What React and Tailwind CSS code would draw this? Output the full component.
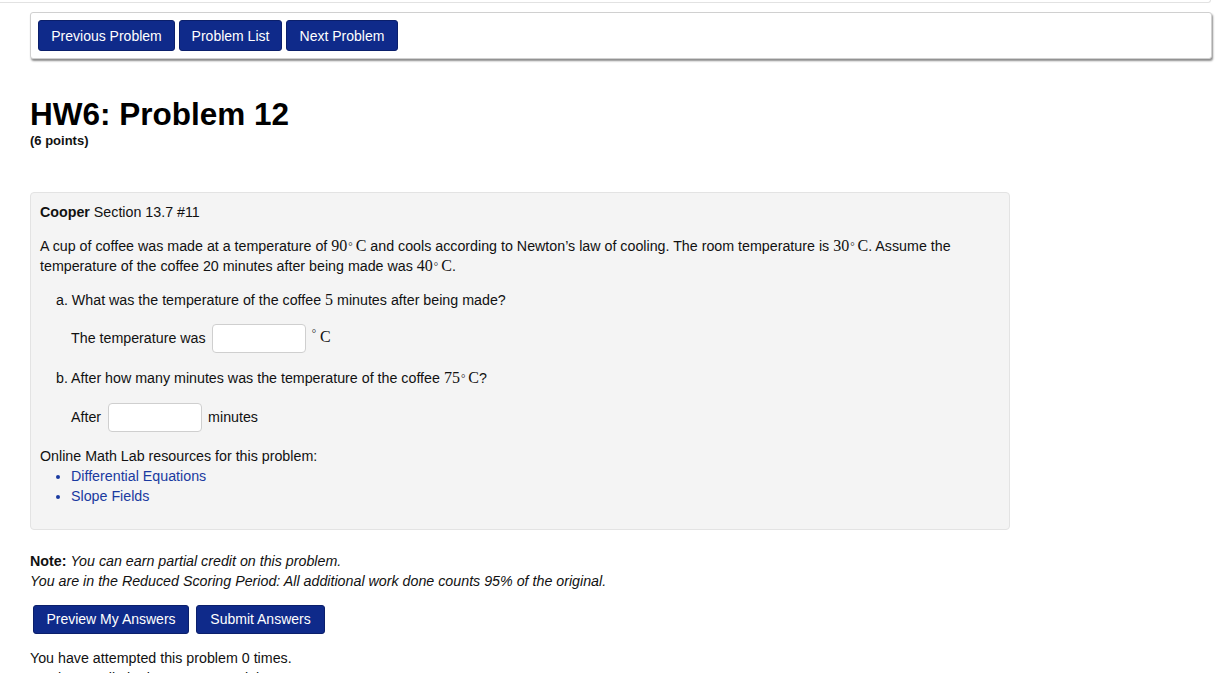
import React from "react";

const btn =
  "bg-[#0f2a8a] text-white text-[14px] rounded-[3px] border border-[#0b1f6b] leading-none flex items-center justify-center";

function Deg({ children }) {
  return (
    <span className="font-['Liberation_Serif',serif] text-[16px]">
      {children}
      <sup className="text-[11px] relative -top-[1px] ml-[1px]">°</sup>
      <span className="ml-[3px]">C</span>
    </span>
  );
}

export default function App() {
  return (
    <div className="h-[673px] bg-white font-['Liberation_Sans',Arial,sans-serif] text-[14.25px] text-[#111] overflow-hidden">
      <div className="h-[3px] w-[1211px] border-b border-r border-[#e2e2e2] rounded-br-[4px]" />
      <div className="pl-[30px] pr-[7px] pt-[9px]">
        <div className="h-[47px] border border-[#d0d0d0] rounded-[3px] bg-white shadow-[1px_2px_2px_rgba(0,0,0,0.45)] flex items-center gap-[4px] pl-[7px]">
          <div className={btn + " w-[137px] h-[31px]"}>Previous Problem</div>
          <div className={btn + " w-[103px] h-[31px]"}>Problem List</div>
          <div className={btn + " w-[112px] h-[31px]"}>Next Problem</div>
        </div>
      </div>

      <div className="pl-[30px]">
        <h1 className="mt-[39px] text-[31.5px] font-bold leading-[32px] text-black">HW6: Problem 12</h1>
        <div className="mt-[1px] text-[13px] font-bold">(6 points)</div>

        <div className="mt-[41px] w-[980px] h-[338px] bg-[#f4f4f4] border border-[#e3e3e3] rounded-[4px] pl-[9px] pt-[9px] leading-[20px]">
          <div>
            <b>Cooper</b> Section 13.7 #11
          </div>
          <div className="mt-[14px]">
            A cup of coffee was made at a temperature of <Deg>90</Deg> and cools according to Newton’s law of cooling. The room temperature is <Deg>30</Deg>. Assume the
            <br />
            temperature of the coffee 20 minutes after being made was <Deg>40</Deg>.
          </div>
          <div className="pl-[16px]">
            <div className="mt-[14px]">
              a. What was the temperature of the coffee <span className="font-['Liberation_Serif',serif] text-[16px]">5</span> minutes after being made?
            </div>
            <div className="mt-[14px] pl-[15px] flex items-center h-[29px]">
              <span>The temperature was</span>
              <div className="ml-[6px] w-[94px] h-[29px] bg-white border border-[#cfcfcf] rounded-[4px]" />
              <span className="ml-[6px] font-['Liberation_Serif',serif] text-[16px] -mt-[2px]">
                <sup className="text-[11px]">°</sup> C
              </span>
            </div>
            <div className="mt-[15px]">
              b. After how many minutes was the temperature of the coffee <Deg>75</Deg>?
            </div>
            <div className="mt-[15px] pl-[15px] flex items-center h-[29px]">
              <span>After</span>
              <div className="ml-[7px] w-[94px] h-[29px] bg-white border border-[#cfcfcf] rounded-[4px]" />
              <span className="ml-[6px]">minutes</span>
            </div>
          </div>
          <div className="mt-[14px]">Online Math Lab resources for this problem:</div>
          <ul className="pl-[31px] list-disc">
            <li className="text-[#1a3aa0]">Differential Equations</li>
            <li className="text-[#1a3aa0]">Slope Fields</li>
          </ul>
        </div>

        <div className="mt-[21px] leading-[20px]">
          <div>
            <b>Note:</b> <i>You can earn partial credit on this problem.</i>
          </div>
          <div>
            <i>You are in the Reduced Scoring Period: All additional work done counts 95% of the original.</i>
          </div>
        </div>

        <div className="mt-[14px] flex gap-[7px] ml-[3px]">
          <div className={btn + " w-[156px] h-[29px]"}>Preview My Answers</div>
          <div className={btn + " w-[129px] h-[29px]"}>Submit Answers</div>
        </div>

        <div className="mt-[14px] leading-[20px]">You have attempted this problem 0 times.</div>
        <div className="leading-[20px]">You have unlimited attempts remaining.</div>
      </div>
    </div>
  );
}
